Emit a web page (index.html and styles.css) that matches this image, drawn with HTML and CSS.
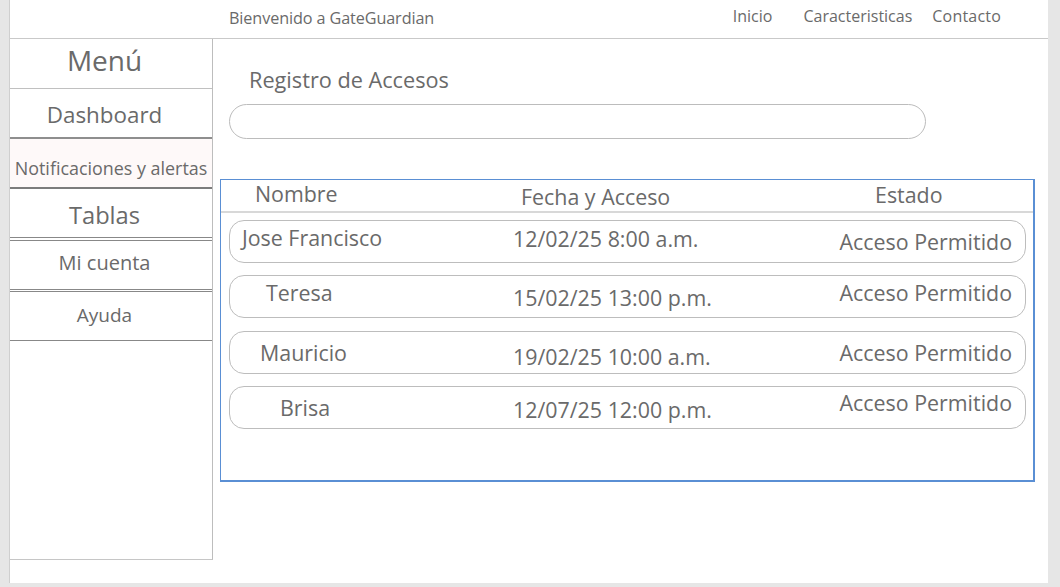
FILE: index.html
```html
<!DOCTYPE html>
<html lang="es">
<head>
<meta charset="utf-8">
<title>GateGuardian</title>
<link rel="stylesheet" href="styles.css">
</head>
<body>
<div class="page">
  <header class="topbar">
    <span class="brand">Bienvenido a GateGuardian</span>
    <nav class="nav">
      <a class="nav-link nav-inicio">Inicio</a>
      <a class="nav-link nav-carac">Caracteristicas</a>
      <a class="nav-link nav-contacto">Contacto</a>
    </nav>
  </header>
  <div class="layout">
    <aside class="sidebar">
      <div class="side-item side-menu">Menú</div>
      <div class="side-item side-dash">Dashboard</div>
      <div class="side-item side-notif">Notificaciones y alertas</div>
      <div class="side-item side-tablas">Tablas</div>
      <div class="side-item side-cuenta">Mi cuenta</div>
      <div class="side-item side-ayuda">Ayuda</div>
    </aside>
    <main class="content">
      <h1 class="title">Registro de Accesos</h1>
      <div class="search"></div>
      <section class="table">
        <div class="thead">
          <span class="th th-nombre">Nombre</span>
          <span class="th th-fecha">Fecha y Acceso</span>
          <span class="th th-estado">Estado</span>
        </div>
        <div class="rows">
          <div class="row r1">
            <span class="cell name">Jose Francisco</span>
            <span class="cell date">12/02/25 8:00 a.m.</span>
            <span class="cell state">Acceso Permitido</span>
          </div>
          <div class="row r2">
            <span class="cell name">Teresa</span>
            <span class="cell date">15/02/25 13:00 p.m.</span>
            <span class="cell state">Acceso Permitido</span>
          </div>
          <div class="row r3">
            <span class="cell name">Mauricio</span>
            <span class="cell date">19/02/25 10:00 a.m.</span>
            <span class="cell state">Acceso Permitido</span>
          </div>
          <div class="row r4">
            <span class="cell name">Brisa</span>
            <span class="cell date">12/07/25 12:00 p.m.</span>
            <span class="cell state">Acceso Permitido</span>
          </div>
        </div>
      </section>
    </main>
  </div>
</div>
</body>
</html>
```

FILE: styles.css
```css
* { box-sizing: border-box; }
html, body { margin: 0; padding: 0; }
body {
  background: #e6e6e6;
  font-family: "Open Sans", "Noto Sans", sans-serif;
  color: #6a6a6a;
  width: 1060px;
  height: 587px;
  overflow: hidden;
}
.page {
  margin-left: 9px;
  width: 1039px;
  height: 583px;
  background: #fff;
  border-left: 1px solid #cfcfcf;
  display: flex;
  flex-direction: column;
}
.topbar {
  height: 39px;
  border-bottom: 1px solid #c9c9c9;
  display: flex;
  align-items: flex-start;
  padding: 0 47px 0 219px;
  flex-shrink: 0;
}
.brand {
  font-size: 16.2px;
  margin-top: 6px;
  line-height: 24px;
  letter-spacing: -0.1px;
}
.nav {
  display: flex;
  margin-left: auto;
  margin-top: 4px;
  font-size: 16px;
  line-height: 24px;
}
.nav-link { color: #6a6a6a; text-decoration: none; }
.nav-carac { margin-left: 31px; }
.nav-contacto { margin-left: 20px; letter-spacing: 0.2px; }

.layout { display: flex; flex: 1; }
.sidebar {
  width: 203px;
  height: 521px;
  border-right: 1px solid #bdbdbd;
  border-bottom: 1px solid #c6c6c6;
  display: flex;
  flex-direction: column;
  flex-shrink: 0;
}
.side-item {
  display: flex;
  align-items: center;
  justify-content: center;
  white-space: nowrap;
  padding-right: 13px;
}
.side-menu { height: 50px; font-size: 28px; border-bottom: 1px solid #c0c0c0; padding-bottom: 7px; }
.side-dash { height: 50px; font-size: 22.4px; border-bottom: 2px solid #8e8e8e; padding-top: 2px; }
.side-notif { height: 50px; font-size: 17.9px; background: #fef9f9; border-bottom: 2px solid #7c7c7c; padding-top: 9px; padding-right: 0; }
.side-tablas { height: 49px; font-size: 23.7px; border-bottom: 1px solid #888; padding-top: 3px; }
.side-cuenta { height: 50px; font-size: 20px; border-top: 1px solid #888; margin-top: 2px; border-bottom: 1px solid #888; padding-bottom: 6px; }
.side-ayuda { height: 50px; font-size: 19px; border-top: 1px solid #888; margin-top: 1px; border-bottom: 1px solid #888; padding-bottom: 2px; }

.content {
  flex: 1;
  padding: 0;
}
.title {
  margin: 26px 0 0 36px;
  font-size: 21.7px;
  font-weight: 400;
  line-height: 30px;
}
.search {
  margin: 9px 0 0 16px;
  width: 697px;
  height: 35px;
  border: 1px solid #bcbcbc;
  border-radius: 18px;
}
.table {
  margin: 40px 0 0 7px;
  width: 815px;
  height: 303px;
  border: 2px solid #5a8fd4;
  border-width: 1px 2px 2px 1px;
}
.thead {
  display: flex;
  height: 33px;
  padding-left: 34px;
  border-bottom: 2px solid #d8d8d8;
  font-size: 21.4px;
  line-height: 28px;
}
.th { display: block; white-space: nowrap; }
.th-nombre { width: 266px; }
.th-fecha { width: 354px; margin-top: 3px; }
.th-estado { margin-top: 1px; }
.rows {
  display: flex;
  flex-direction: column;
  padding: 7px 0 0 8px;
}
.row {
  width: 797px;
  height: 43px;
  border: 1px solid #bdbdbd;
  border-radius: 15px;
  display: flex;
  align-items: flex-start;
  font-size: 21.4px;
  line-height: 28px;
}
.r1 { margin-bottom: 12px; }
.r2 { margin-bottom: 13px; }
.r3 { margin-bottom: 12px; }
.cell { display: block; white-space: nowrap; }
.name { width: 283px; }
.date { width: 325px; }
.state { flex: 1; text-align: right; padding-right: 13px; }

.r1 .name { padding-left: 12px; margin-top: 3px; }
.r1 .date { margin-top: 4px; }
.r1 .state { margin-top: 7px; }
.r2 .name { padding-left: 36px; margin-top: 3px; }
.r2 .date { margin-top: 8px; }
.r2 .state { margin-top: 3px; }
.r3 .name { padding-left: 30px; margin-top: 7px; }
.r3 .date { margin-top: 11px; }
.r3 .state { margin-top: 7px; }
.r4 .name { padding-left: 50px; margin-top: 7px; }
.r4 .date { margin-top: 9px; }
.r4 .state { margin-top: 2px; }
```
